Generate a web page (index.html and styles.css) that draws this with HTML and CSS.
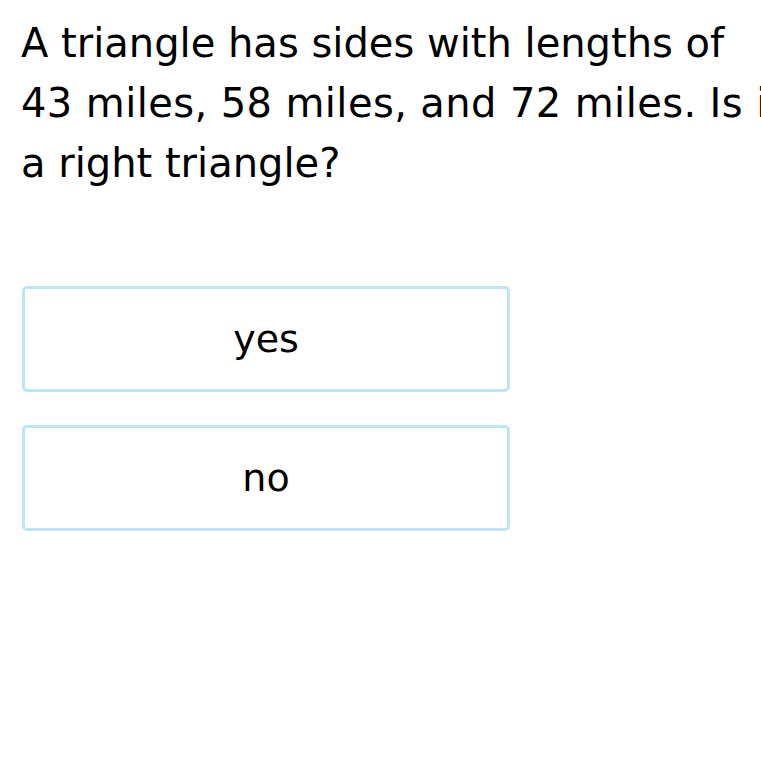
FILE: index.html
```html
<!DOCTYPE html>
<html>
<head>
<meta charset="utf-8">
<link rel="stylesheet" href="styles.css">
</head>
<body>
<div class="page">
  <p class="question">A triangle has sides with lengths of<br><span class="wide">43 miles, 58 miles, and 72 miles. Is it</span><br>a right triangle?</p>
  <div class="choices">
    <div class="choice">yes</div>
    <div class="choice">no</div>
  </div>
</div>
</body>
</html>
```
FILE: styles.css
```css
html, body {
  margin: 0;
  padding: 0;
  background: #ffffff;
  overflow: hidden;
}
.page {
  width: 761px;
  padding: 13px 0 0 21px;
  box-sizing: border-box;
  font-family: "DejaVu Sans", Verdana, sans-serif;
  color: #000;
}
.question {
  margin: 0;
  white-space: nowrap;
  font-size: 40px;
  line-height: 60px;
}
.wide {
  letter-spacing: 0.4px;
}
.choices {
  margin-top: 93px;
  display: flex;
  flex-direction: column;
  gap: 33px;
  width: 488px;
  margin-left: 1px;
}
.choice {
  height: 106px;
  box-sizing: border-box;
  border: 3px solid #bce6f7;
  border-radius: 5px;
  display: flex;
  align-items: center;
  justify-content: center;
  font-size: 38px;
}
```
